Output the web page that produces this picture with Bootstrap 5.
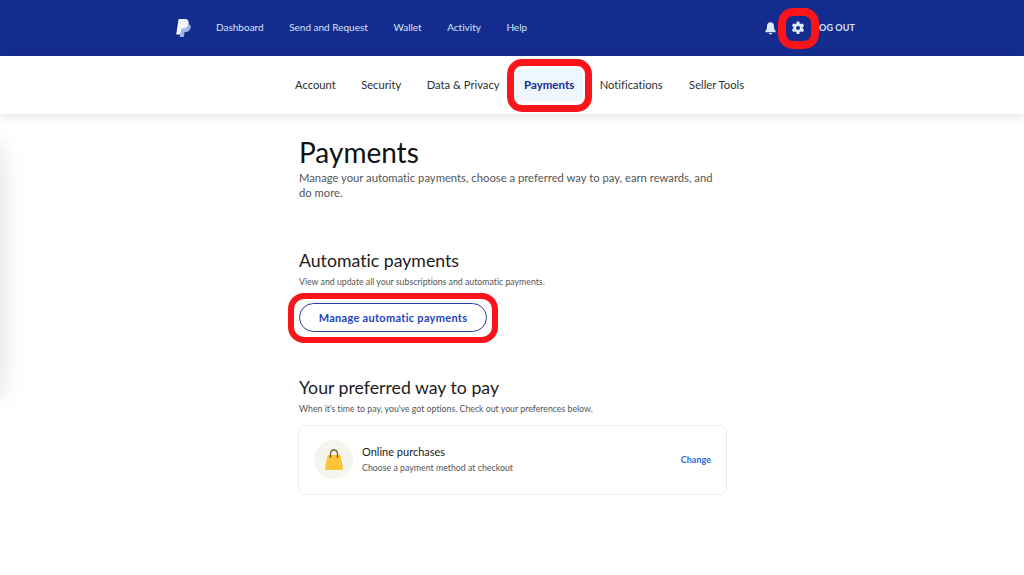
<!DOCTYPE html>
<html lang="en">
<head>
    <meta charset="UTF-8">
    <title>Payments</title>
    <meta name="viewport" content="width=device-width, initial-scale=1">
    <link href="https://cdn.jsdelivr.net/npm/bootstrap@5.3.0/dist/css/bootstrap.min.css" rel="stylesheet">
    <style>
        body { font-family: "Lato", "Liberation Sans", sans-serif; font-variant-ligatures: none; color: #2c2e2f; overflow: hidden; background: #fff; }
        .top-bar { height: 56px; background: #142c8e; padding-left: 176px; padding-right: 169px; }
        .top-links { gap: 25.5px; margin-left: 25px; margin-bottom: 1px; }
        .top-links a { color: #d5e4f7; font-size: 10px; text-decoration: none; }
        .pp-logo { width: 15px; height: 19px; }
        .bell-icon { width: 11px; height: 13px; margin-right: 10px; }
        .gear-box { width: 25px; height: 25px; outline: 8px solid #fb1419; border-radius: 7px; position: relative; z-index: 1; }
        .gear-icon { width: 14px; height: 14px; }
        .logout-link { color: #d5e4f7; font-size: 9px; font-weight: 700; margin-left: 4px; text-decoration: none; letter-spacing: .1px; }
        .sub-bar { height: 58px; box-shadow: 0 2px 10px rgba(0,0,0,.12); padding-left: 295px; position: relative; }
        .sub-bar a { color: #2c2e2f; font-size: 11.2px; text-decoration: none; }
        .sub-links { gap: 25.5px; }
        .sub-links a:last-child { margin-left: 1px; }
        .tab-on { position: relative; color: #142c8e !important; font-weight: 700; font-size: 11.5px !important; background: #eef6fe; border-radius: 7px; padding: 7px 9px; margin: 0 -9px 0 -10px; }
        .tab-on::after { content: ""; position: absolute; top: -10px; bottom: -11px; left: -8px; right: -9px; border: 7px solid #fb1419; border-radius: 15px; }
        .side-glow { position: absolute; left: -30px; top: 145px; width: 30px; height: 250px; box-shadow: 0 0 26px rgba(0,0,0,.14); }
        .main-col { width: 428px; margin-left: 299px; padding-top: 22px; }
        .page-title { font-size: 28px; font-weight: 400; color: #111; line-height: 33px; margin: 0 0 1px; }
        .page-lead { font-size: 11.25px; line-height: 15px; color: #555; margin: 0; }
        .sec-title { font-size: 17.7px; font-weight: 400; color: #1c1c1c; line-height: 22px; margin: 0 0 4px; }
        .sec-note { font-size: 8.75px; line-height: 12px; color: #555; margin: 0; }
        .sec-auto { margin-top: 50px; }
        .sec-pay { margin-top: 45px; }
        .manage-btn { position: relative; width: 188px; height: 29px; margin-top: 15px; padding: 1px 0 0; font-size: 11px; font-weight: 700; letter-spacing: .3px; color: #2243c4; background: #fff; border: 1.5px solid #243f9e; border-radius: 15px; }
        .manage-btn::after { content: ""; position: absolute; top: -11.5px; bottom: -11.5px; left: -12.5px; right: -12px; border: 6.5px solid #fb1419; border-radius: 16px; }
        .pay-card { height: 70px; margin-top: 10px; margin-left: -1px; border: 1px solid #ececec; border-radius: 8px; padding: 0 15px 1px; }
        .bag-circle { width: 39px; height: 39px; background: #f5f4ef; margin-right: 9px; }
        .bag-icon { width: 18px; height: 21px; }
        .card-name { font-size: 11px; line-height: 14px; color: #1c1c1c; margin-bottom: 3px; }
        .card-note { font-size: 8.8px; line-height: 12px; color: #555; }
        .change-link { font-size: 9px; font-weight: 700; color: #2a6fe0; text-decoration: none; margin-top: 1px; }
    </style>
</head>
<body>
    <!-- Top bar -->
    <nav class="top-bar d-flex align-items-center">
        <svg class="pp-logo" viewBox="0 0 15 19">
            <path fill="#9fb3e6" d="M5 5h6.500c2.600 0 3.600 1.700 3.200 3.800-.5 2.700-2.300 4.200-4.800 4.200H8.600l-.8 5H3.900z"/>
            <path fill="#f4f7fd" d="M2.600 0h6c3 0 4.600 1.500 4 4.500C12 7.800 10 9.600 7 9.600H5.300l-.9 6H.2z"/>
        </svg>
        <div class="top-links d-flex">
            <a href="#">Dashboard</a>
            <a href="#">Send and Request</a>
            <a href="#">Wallet</a>
            <a href="#">Activity</a>
            <a href="#">Help</a>
        </div>
        <div class="ms-auto d-flex align-items-center">
            <svg class="bell-icon" viewBox="0 0 13 15">
                <path fill="#d9ecff" d="M6.500 0C4 0 2.400 2 2.400 4.600c0 3-.7 4.600-2 6v1.200h12.200v-1.200c-1.300-1.400-2-3-2-6C10.600 2 9 0 6.500 0zM4.700 12.800a1.800 1.800 0 0 0 3.600 0z"/>
            </svg>
            <div class="gear-box d-flex align-items-center justify-content-center">
                <svg class="gear-icon" viewBox="0 0 14 14">
                    <path fill="#d9ecff" fill-rule="evenodd" d="M5.700.5h2.600l.4 1.900 1.300.7 1.800-.6 1.300 2.200-1.400 1.300v1.500l1.400 1.300-1.300 2.200-1.800-.6-1.300.7-.4 1.900H5.700l-.4-1.900-1.300-.7-1.800.6L.9 8.800l1.400-1.300V6L.9 4.700l1.300-2.200 1.800.6 1.300-.7zM7 5a2 2 0 1 0 0 4 2 2 0 0 0 0-4z"/>
                </svg>
            </div>
            <a class="logout-link" href="#">LOG OUT</a>
        </div>
    </nav>

    <!-- Sub nav -->
    <div class="sub-bar d-flex align-items-center">
        <div class="sub-links d-flex align-items-center">
            <a href="#">Account</a>
            <a href="#">Security</a>
            <a href="#">Data &amp; Privacy</a>
            <a class="tab-on" href="#">Payments</a>
            <a href="#">Notifications</a>
            <a href="#">Seller Tools</a>
        </div>
    </div>

    <div class="side-glow"></div>

    <main class="main-col">
        <h1 class="page-title">Payments</h1>
        <p class="page-lead">Manage your automatic payments, choose a preferred way to pay, earn rewards, and do more.</p>

        <section class="sec-auto">
            <h2 class="sec-title">Automatic payments</h2>
            <p class="sec-note">View and update all your subscriptions and automatic payments.</p>
            <button type="button" class="btn manage-btn d-block">Manage automatic payments</button>
        </section>

        <section class="sec-pay">
            <h2 class="sec-title">Your preferred way to pay</h2>
            <p class="sec-note">When it's time to pay, you've got options. Check out your preferences below.</p>
            <div class="pay-card d-flex align-items-center">
                <div class="bag-circle rounded-circle d-flex align-items-center justify-content-center">
                    <svg class="bag-icon" viewBox="0 0 18 21">
                        <path fill="none" stroke="#7a5a22" stroke-width="1.3" d="M5.500 9V4.500a3.500 3.500 0 0 1 7 0V9"/>
                        <path fill="#fdc33a" d="M2.500 6h13L18 19c.1 1.200-.7 2-1.800 2H1.800C.7 21-.1 20.200 0 19z"/>
                        <path fill="none" stroke="#7a5a22" stroke-width="1.3" d="M5.500 6v3M12.500 6v3"/>
                    </svg>
                </div>
                <div class="flex-grow-1">
                    <div class="card-name">Online purchases</div>
                    <div class="card-note">Choose a payment method at checkout</div>
                </div>
                <a class="change-link" href="#">Change</a>
            </div>
        </section>
    </main>

    <script src="https://cdn.jsdelivr.net/npm/bootstrap@5.3.0/dist/js/bootstrap.bundle.min.js"></script>
</body>
</html>
